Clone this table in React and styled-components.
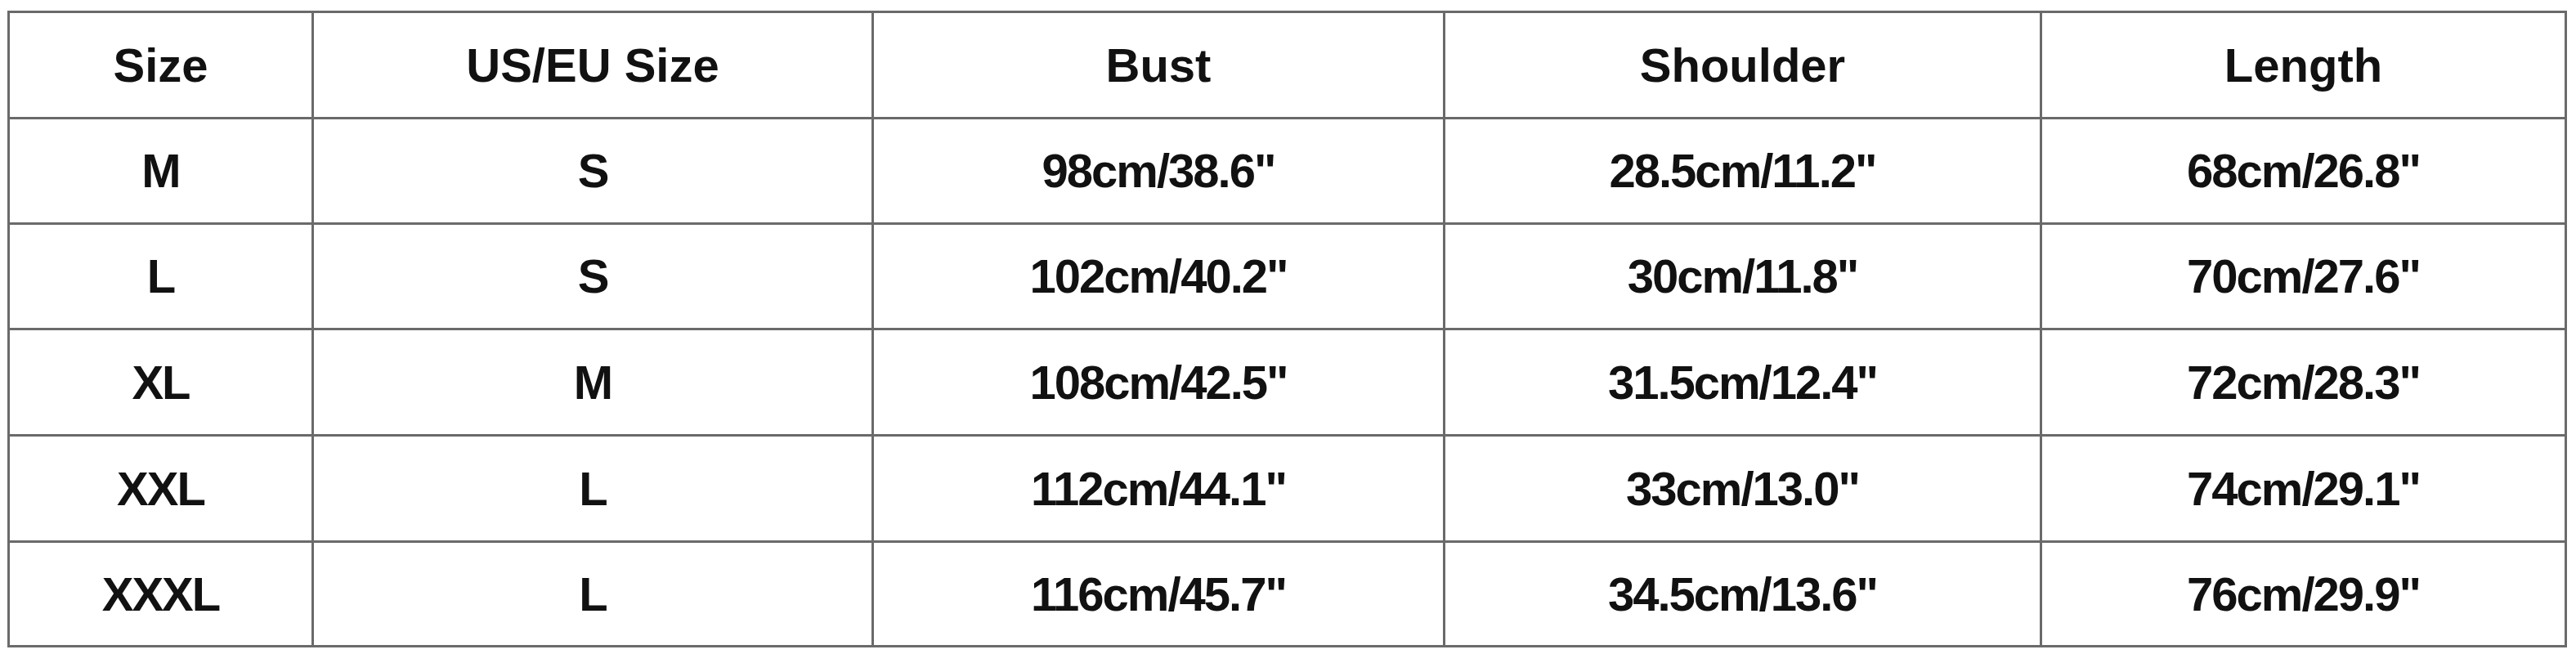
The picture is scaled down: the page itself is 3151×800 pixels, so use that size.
import React from "react";
import styled, { createGlobalStyle } from "styled-components";

const Global = createGlobalStyle`
  html, body {
    margin: 0;
    padding: 0;
    background: #ffffff;
  }
  body {
    font-family: "Liberation Sans", Arial, sans-serif;
  }
`;

const Page = styled.div`
  padding: 13px 0 0 9px;
  background: #ffffff;
  width: 3151px;
  height: 800px;
  box-sizing: border-box;
`;

const Table = styled.table`
  border-collapse: collapse;
  table-layout: fixed;
  width: 3131px;
  font-family: "Liberation Sans", Arial, sans-serif;
  font-weight: 700;
  font-size: 58px;
  color: #111111;
`;

const Col = styled.col`
  width: ${(p) => p.$w}px;
`;

const Row = styled.tr`
  height: ${(p) => p.$h}px;
`;

const HeadCell = styled.th`
  border: 3px solid #6a6a6a;
  padding: 0;
  text-align: center;
  vertical-align: middle;
  font-weight: 700;
  letter-spacing: 0;
  line-height: 1;
  white-space: nowrap;
`;

const Cell = styled.td`
  border: 3px solid #6a6a6a;
  padding: 0;
  text-align: center;
  vertical-align: middle;
  letter-spacing: -2px;
  line-height: 1;
  white-space: nowrap;
`;

const columns = [372, 685, 699, 730, 642];
const heads = ["Size", "US/EU Size", "Bust", "Shoulder", "Length"];
const rows = [
  ["M", "S", "98cm/38.6\"", "28.5cm/11.2\"", "68cm/26.8\""],
  ["L", "S", "102cm/40.2\"", "30cm/11.8\"", "70cm/27.6\""],
  ["XL", "M", "108cm/42.5\"", "31.5cm/12.4\"", "72cm/28.3\""],
  ["XXL", "L", "112cm/44.1\"", "33cm/13.0\"", "74cm/29.1\""],
  ["XXXL", "L", "116cm/45.7\"", "34.5cm/13.6\"", "76cm/29.9\""],
];
const heights = [130, 129, 129, 130, 130, 128];

export default function App() {
  return (
    <Page>
      <Global />
      <Table>
        <colgroup>
          {columns.map((w, i) => (
            <Col key={i} $w={w} />
          ))}
        </colgroup>
        <thead>
          <Row $h={heights[0]}>
            {heads.map((h) => (
              <HeadCell key={h}>{h}</HeadCell>
            ))}
          </Row>
        </thead>
        <tbody>
          {rows.map((r, i) => (
            <Row key={i} $h={heights[i + 1]}>
              {r.map((c, j) => (
                <Cell key={j}>{c}</Cell>
              ))}
            </Row>
          ))}
        </tbody>
      </Table>
    </Page>
  );
}
